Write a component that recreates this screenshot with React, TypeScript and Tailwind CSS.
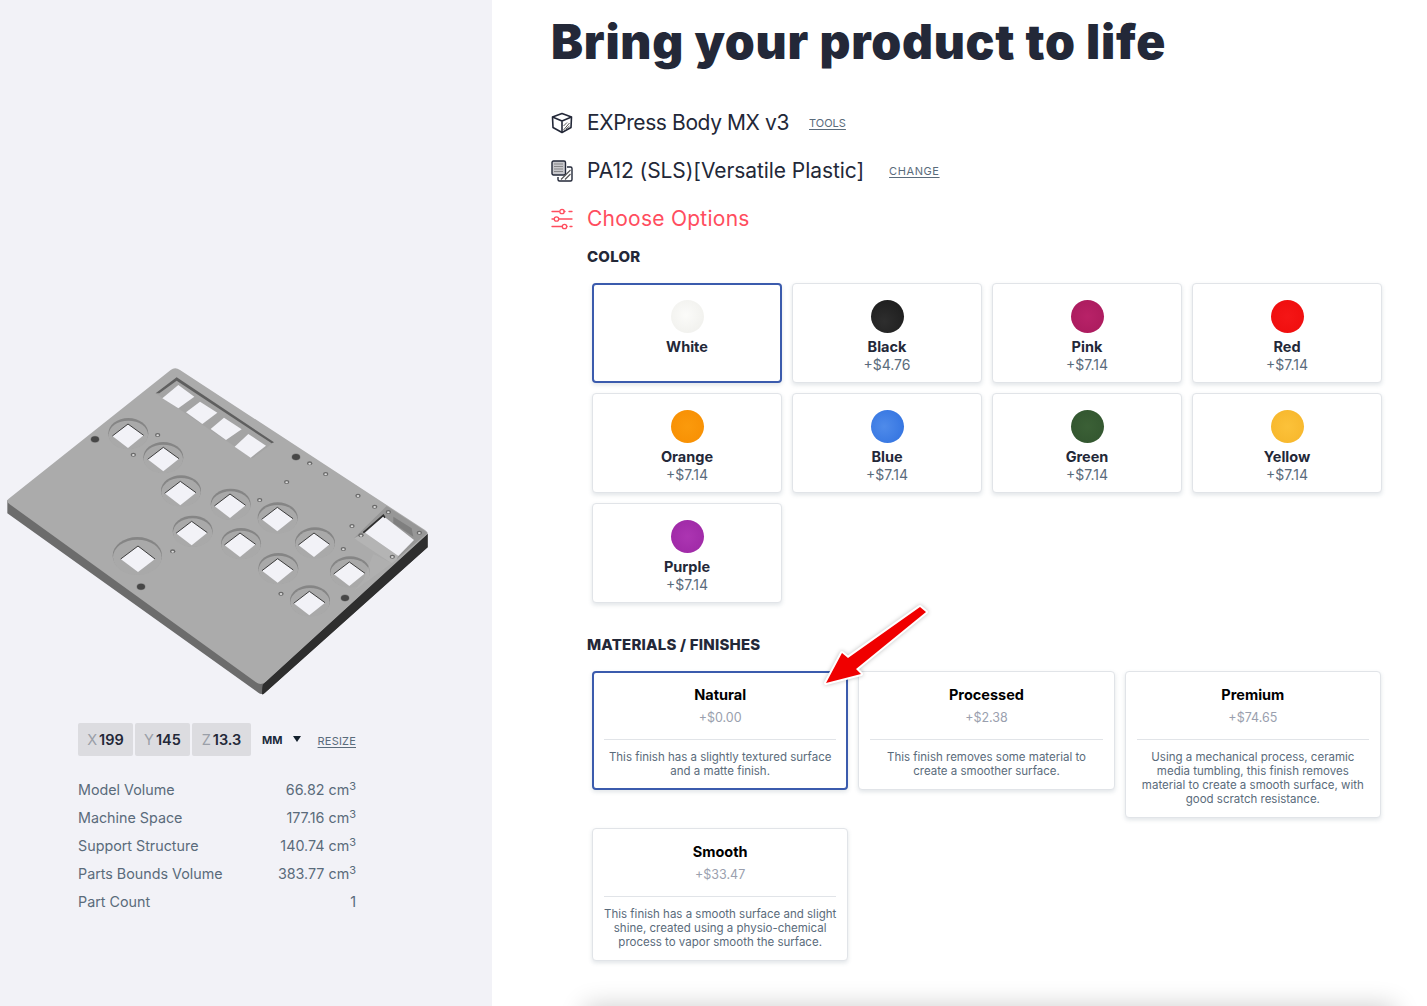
import React from "react";

const FONT = "font-['Inter',_'Liberation_Sans',_sans-serif]";

const colors = [
  { name: "White", price: "", dot: "bg-[radial-gradient(circle_at_45%_45%,#fbfbf9,#eeeeea)]", selected: true },
  { name: "Black", price: "+$4.76", dot: "bg-[radial-gradient(circle_at_40%_65%,#2e2e2e,#1a1a1a)]" },
  { name: "Pink", price: "+$7.14", dot: "bg-[radial-gradient(circle_at_50%_50%,#b82268,#a81a5c)]" },
  { name: "Red", price: "+$7.14", dot: "bg-[radial-gradient(circle_at_50%_50%,#f51616,#ee0c0c)]" },
  { name: "Orange", price: "+$7.14", dot: "bg-[radial-gradient(circle_at_50%_50%,#fb9a0c,#f78e02)]" },
  { name: "Blue", price: "+$7.14", dot: "bg-[radial-gradient(circle_at_40%_50%,#4f8bea,#2f70df)]" },
  { name: "Green", price: "+$7.14", dot: "bg-[radial-gradient(circle_at_50%_50%,#3b6036,#31542e)]" },
  { name: "Yellow", price: "+$7.14", dot: "bg-[radial-gradient(circle_at_50%_50%,#fcc23a,#f6b52a)]" },
  { name: "Purple", price: "+$7.14", dot: "bg-[radial-gradient(circle_at_50%_50%,#ac35b2,#9c27a4)]" },
];

const finishes = [
  { name: "Natural", price: "+$0.00", text: ["This finish has a slightly textured surface", "and a matte finish."], selected: true },
  { name: "Processed", price: "+$2.38", text: ["This finish removes some material to", "create a smoother surface."] },
  { name: "Premium", price: "+$74.65", text: ["Using a mechanical process, ceramic", "media tumbling, this finish removes", "material to create a smooth surface, with", "good scratch resistance."] },
  { name: "Smooth", price: "+$33.47", text: ["This finish has a smooth surface and slight", "shine, created using a physio-chemical", "process to vapor smooth the surface."] },
];

const stats = [
  { label: "Model Volume", value: "66.82", unit: true },
  { label: "Machine Space", value: "177.16", unit: true },
  { label: "Support Structure", value: "140.74", unit: true },
  { label: "Parts Bounds Volume", value: "383.77", unit: true },
  { label: "Part Count", value: "1", unit: false },
];

// [ellipse cx, cy, diamond cx, cy] in 3x model coords
const holes = [
  [385, 250, 384, 258], [490, 322, 490, 328], [543, 422, 541, 430], [692, 462, 690, 468],
  [833, 503, 832, 508], [578, 543, 575, 550], [723, 580, 720, 585], [945, 578, 942, 585],
  [835, 655, 833, 662], [1050, 665, 1048, 672], [930, 752, 928, 760],
];
const bigBolts = [[285, 268], [888, 321], [423, 710], [1035, 744]];
const smallBolts = [
  [473, 255], [400, 314], [929, 340], [977, 372], [860, 396], [1074, 437], [1124, 470], [1165, 486],
  [779, 450], [1056, 528], [1083, 556], [1258, 548], [1177, 620], [1030, 597], [518, 604], [843, 731],
];
const slots = [
  "535,105 583,140 535,175 487,145",
  "600,155 652,188 607,222 558,187",
  "672,203 725,238 678,270 632,237",
  "745,252 798,287 752,323 704,290",
];

const PlateModel = () => (
  <svg viewBox="0 0 1320 1080" className="block h-[360px] w-[440px]">
    <path d="M22 450 L22 490 L775 1028 Q785 1036 795 1028 L1283 592 L1283 550 L790 1000 Z" fill="#6c6c6c" />
    <path d="M790 1002 Q786 1005 786 1033 Q790 1034 795 1028 L1283 592 L1283 552 Z" fill="#2e2e2e" />
    <path d="M512 60 Q525 50 540 60 L1275 540 Q1287 548 1278 556 L797 995 Q783 1008 768 997 L28 462 Q16 453 28 445 Z" fill="#ababab" />
    {/* connector pocket along the top edge */}
    <path d="M530 82 L822 277 L757 325 L467 130 Z" fill="#a4a4a4" />
    <path d="M530 82 L822 277 L815 280 L530 92 L478 130 L467 130 Z" fill="#5f5f5f" />
    {slots.map((p) => (
      <polygon key={p} points={p} fill="#f2f2f7" />
    ))}
    {holes.map(([ex, ey, dx, dy]) => (
      <g key={`${ex}-${ey}`}>
        <ellipse cx={ex} cy={ey} rx={60} ry={46} fill="#858585" />
        <ellipse cx={ex} cy={ey + 5} rx={59} ry={43} fill="#a9a9a9" />
        <polygon points={`${dx},${dy - 36} ${dx + 47},${dy - 2} ${dx},${dy + 36} ${dx - 47},${dy}`} fill="#f2f2f7" />
        <path d={`M${dx - 47} ${dy} L${dx} ${dy - 36} L${dx + 47} ${dy - 2}`} fill="none" stroke="#3c3c3c" strokeWidth="3" />
      </g>
    ))}
    <ellipse cx={412} cy={617} rx={74} ry={56} fill="#858585" />
    <ellipse cx={412} cy={622} rx={73} ry={53} fill="#a9a9a9" />
    <polygon points="414,588 465,627 414,666 362,627" fill="#f2f2f7" />
    <path d="M362 627 L414 588 L465 627" fill="none" stroke="#3c3c3c" strokeWidth="3" />
    {/* switch bracket in the corner */}
    <path d="M1160 468 L1283 548 L1190 628 L1062 565 Z" fill="#979797" />
    <path d="M1062 565 L1095 548 L1195 618 L1190 628 L1175 640 Z" fill="#b4b4b4" />
    <path d="M1175 640 L1120 612 L1090 690 L1062 722 L1120 680 Z" fill="#b2b2b2" opacity="0.6" />
    <polygon points="1150,498 1242,570 1195,618 1095,548" fill="#f2f2f7" />
    <path d="M1090 548 L1150 496 L1155 503" fill="none" stroke="#2e2e2e" strokeWidth="5" />
    <path d="M1180 500 L1235 535 L1240 560 L1180 520 Z" fill="#7f7f7f" />
    {bigBolts.map(([x, y]) => (
      <g key={`${x}-${y}`}>
        <ellipse cx={x} cy={y} rx={14} ry={11} fill="#8f8f8f" />
        <ellipse cx={x} cy={y} rx={12} ry={9} fill="#474747" />
      </g>
    ))}
    {smallBolts.map(([x, y]) => (
      <g key={`${x}-${y}`}>
        <ellipse cx={x} cy={y} rx={8} ry={6} fill="#6a6a6a" />
        <ellipse cx={x} cy={y + 1} rx={4} ry={3} fill="#dcdcdc" />
      </g>
    ))}
  </svg>
);

const CubeIcon = () => (
  <svg viewBox="0 0 22 22" className="h-[22px] w-[22px] shrink-0" fill="none" stroke="#232838" strokeWidth="1.6" strokeLinejoin="round">
    <path d="M11 1.5 L20.5 5 L20 15.5 L11 20.5 L2 15.5 L1.5 5 Z" />
    <path d="M1.5 5 L11 9 L20.5 5 M11 9 V20.5" />
    <path d="M12.5 18 L18.5 11 M12.5 14 L16 10.5 M15 17 L18.5 14" stroke="#555" strokeWidth="1" />
  </svg>
);

const MaterialIcon = () => (
  <svg viewBox="0 0 22 22" className="h-[22px] w-[22px] shrink-0" fill="none" stroke="#232838" strokeWidth="1.4">
    <rect x="1" y="1" width="13.5" height="14" rx="1.5" fill="#c8c8cc" />
    <path d="M3.5 4 H12 M3.5 6.5 H12 M3.5 9 H12 M3.5 11.5 H12" stroke="#444" strokeWidth="1" strokeDasharray="1 1" />
    <path d="M16 7 H19.5 Q21 7 21 8.5 V19.5 Q21 21 19.5 21 H8.5 Q7 21 7 19.5 V17" />
    <path d="M10 19.5 L19.5 10 M14 19.5 L19.5 14" stroke="#555" strokeWidth="1.2" />
  </svg>
);

const SlidersIcon = () => (
  <svg viewBox="0 0 22 22" className="h-[22px] w-[22px] shrink-0" fill="none" stroke="#ff4d5e" strokeWidth="1.3" strokeLinecap="round">
    <path d="M1 3.5 H8 M13 3.5 H14 M18 3.5 H21" />
    <circle cx="11" cy="3.5" r="2.2" />
    <path d="M1 11 H3 M8 11 H21" />
    <circle cx="5.5" cy="11" r="2.2" />
    <path d="M1 18.5 H11 M16 18.5 H16 M19 18.5 H21" />
    <circle cx="13.5" cy="18.5" r="2.2" />
  </svg>
);

const Arrow = () => (
  <svg
    viewBox="0 0 120 95"
    className="pointer-events-none absolute left-[818px] top-[600px] h-[95px] w-[120px] drop-shadow-[0_0_2px_rgba(0,0,0,0.25)]"
  >
    <path
      d="M8 83 L24 53 L30 58 L102 7 L108 12 L38 69 L43 74 Z"
      fill="#f00000"
      stroke="#ffffff"
      strokeWidth="4"
      strokeLinejoin="round"
      paintOrder="stroke"
    />
  </svg>
);

const Dim = ({ axis, value, width }: { axis: string; value: string; width: string }) => (
  <div className={`flex h-[33px] items-center justify-center gap-[2px] rounded-[2px] bg-[#dcdce0] pt-[1px] text-[14.5px] ${width}`}>
    <span className="text-[#9a9fa8]">{axis}</span>
    <span className="font-semibold text-[#232838]">{value}</span>
  </div>
);

const App = () => (
  <div className={`relative flex h-[1006px] w-full overflow-hidden bg-white ${FONT}`}>
    {/* left: model preview */}
    <aside className="flex h-full w-[492px] shrink-0 flex-col bg-[#f2f2f7] pt-[350px]">
      <PlateModel />
      <div className="ml-[78px] mt-[13px] w-[278px]">
        <div className="flex items-center">
          <div className="flex gap-[2px]">
            <Dim axis="X" value="199" width="w-[55px]" />
            <Dim axis="Y" value="145" width="w-[55px]" />
            <Dim axis="Z" value="13.3" width="w-[59px]" />
          </div>
          <span className="ml-[11px] pt-[1px] text-[11px] font-bold text-[#1a2a3a]">MM</span>
          <span className="mb-[2px] ml-[10px] h-0 w-0 border-x-[4px] border-t-[6px] border-x-transparent border-t-[#14202c]" />
          <span className="ml-auto pt-[3px] text-[11px] tracking-[0.2px] text-[#5a6b7b] underline underline-offset-2">RESIZE</span>
        </div>
        <dl className="mt-[20px] flex flex-col">
          {stats.map((s) => (
            <div key={s.label} className="flex h-[28px] items-center justify-between text-[14.3px] text-[#5a6b7b]">
              <dt>{s.label}</dt>
              <dd>
                {s.value}
                {s.unit && (
                  <>
                    {" "}cm<sup className="text-[11px]">3</sup>
                  </>
                )}
              </dd>
            </div>
          ))}
        </dl>
      </div>
    </aside>

    {/* right: configurator */}
    <main className="min-w-0 flex-1 pl-[59px] pt-[18px]">
      <h1 className="text-[48px] font-black leading-[48px] tracking-[0.75px] text-[#232838]">Bring your product to life</h1>

      <div className="mt-[33px] flex h-[48px] items-center text-[21px] text-[#232838]">
        <CubeIcon />
        <span className="ml-[14px] tracking-[-0.4px]">EXPress Body MX v3</span>
        <span className="ml-[20px] text-[11px] text-[#5a6b7b] underline underline-offset-2">TOOLS</span>
      </div>
      <div className="flex h-[48px] items-center text-[21px] text-[#232838]">
        <MaterialIcon />
        <span className="ml-[14px] tracking-[-0.07px]">PA12 (SLS)[Versatile Plastic]</span>
        <span className="ml-[25px] text-[11px] tracking-[0.6px] text-[#5a6b7b] underline underline-offset-2">CHANGE</span>
      </div>
      <div className="flex h-[48px] items-center text-[21px] text-[#ff4d5e]">
        <SlidersIcon />
        <span className="ml-[14px] tracking-[0.25px]">Choose Options</span>
      </div>

      <div className="ml-[36px]">
        <h2 className="mt-[4px] text-[15px] font-extrabold leading-[20px] tracking-[0.2px] text-[#232838]">COLOR</h2>
        <div className="ml-[5px] mt-[16px] grid w-[790px] grid-cols-4 gap-[10px]">
          {colors.map((c) => (
            <div
              key={c.name}
              className={`flex h-[100px] flex-col items-center rounded-[4px] bg-white pt-[16px] shadow-[0_2px_4px_rgba(90,110,130,0.18)] ${
                c.selected ? "border-2 border-[#3b5bad] !pt-[15px]" : "border border-[#e1e4e8]"
              }`}
            >
              <span className={`h-[33px] w-[33px] rounded-full ${c.dot}`} />
              <span className="mt-[4px] text-[14.5px] font-bold leading-[19px] text-[#232838]">{c.name}</span>
              {c.price && <span className="text-[14px] leading-[18px] text-[#5a6b7b]">{c.price}</span>}
            </div>
          ))}
        </div>

        <h2 className="mt-[32px] text-[15px] font-extrabold leading-[20px] tracking-[0.2px] text-[#232838]">MATERIALS / FINISHES</h2>
        <div className="ml-[5px] mt-[16px] grid w-[789px] grid-cols-3 items-start gap-x-[10px] gap-y-[10px]">
          {finishes.map((f) => (
            <div
              key={f.name}
              className={`rounded-[4px] bg-white px-[11px] pb-[11px] pt-[13px] text-center shadow-[0_2px_4px_rgba(90,110,130,0.18)] ${
                f.selected ? "border-2 border-[#3b5bad] !px-[10px] !pb-[10px] !pt-[12px]" : "border border-[#e1e4e8]"
              }`}
            >
              <div className="text-[14.5px] font-bold leading-[20px] text-black">{f.name}</div>
              <div className="mt-[3px] text-[12.5px] leading-[20px] text-[#9a9fae]">{f.price}</div>
              <div className="mt-[11px] border-t border-[#e1e4e8] pt-[10px] text-[11.5px] leading-[14px] text-[#5a6b7b]">
                {f.text.map((line) => (
                  <div key={line}>{line}</div>
                ))}
              </div>
            </div>
          ))}
        </div>
      </div>
    </main>

    <Arrow />
    {/* sticky footer sitting just below the fold, only its shadow shows */}
    <div className="absolute left-[585px] top-[1006px] h-[60px] w-[810px] shadow-[0_0_26px_rgba(0,0,0,0.2)]" />
  </div>
);

export default App;
